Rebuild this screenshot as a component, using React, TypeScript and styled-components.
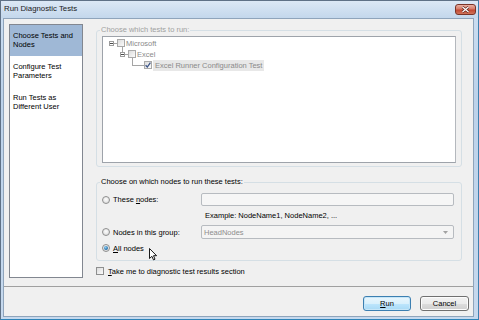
import styled, { createGlobalStyle } from "styled-components";

const GlobalStyle = createGlobalStyle`
  html, body {
    margin: 0;
    padding: 0;
    background: #fff;
  }
  body {
    font-family: "Liberation Sans", Arial, sans-serif;
    font-size: 7.5px;
    color: #000;
  }
  * {
    box-sizing: border-box;
  }
`;

const Window = styled.div`
  position: relative;
  width: 479px;
  height: 320px;
  display: flex;
  flex-direction: column;
  border: 1px solid #5f7186;
  border-right-color: #3d7fae;
  border-bottom-color: #2f84b8;
  background: linear-gradient(#cddff2, #bcd2ea 30%, #c6d9ee);
  overflow: hidden;
`;

const TitleBar = styled.div`
  flex: 0 0 17px;
  display: flex;
  align-items: flex-start;
  justify-content: space-between;
  padding: 0 2px 0 3px;
  background: linear-gradient(#dce8f5, #c3d7ec);
`;

const Title = styled.span`
  font-size: 7.8px;
  line-height: 16px;
  color: #1a1a1a;
`;

const CloseButton = styled.div`
  margin-top: 3px;
  width: 21px;
  height: 11px;
  border: 1px solid #7a3428;
  border-radius: 3px;
  background: linear-gradient(#eab0a2, #d67a68 45%, #c24832 55%, #d0735a);
  display: flex;
  align-items: center;
  justify-content: center;
`;

const Client = styled.div`
  flex: 1;
  margin: 0 4px 2px 2px;
  border: 1px solid #8fa4bb;
  background: #f0f0f0;
  display: flex;
  flex-direction: column;
`;

const Main = styled.div`
  flex: 0 0 268px;
  display: flex;
  padding: 5px 11px 0 5px;
  border-bottom: 1px solid #a0a0a0;
`;

const Nav = styled.div`
  flex: 0 0 74px;
  height: 254px;
  border: 1px solid #828790;
  background: #fff;
  display: flex;
  flex-direction: column;
`;

const NavItem = styled.div<{ $selected?: boolean }>`
  padding: 6px 3px 7px;
  line-height: 9px;
  background: ${(p) => (p.$selected ? "#9fb8d6" : "transparent")};
`;

const Content = styled.div`
  flex: 1;
  margin-left: 13px;
  display: flex;
  flex-direction: column;
`;

const Group = styled.fieldset<{ $gap?: number }>`
  margin: ${(p) => p.$gap ?? 1}px 0 0;
  padding: 0 5px ${(p) => (p.$gap ? 7 : 3)}px;
  border: 1px solid #d5dfe5;
  border-radius: 3px;
  min-width: 0;
  display: flex;
  flex-direction: column;
`;

const GroupLabel = styled.legend<{ $disabled?: boolean }>`
  padding: 0 1px;
  margin-left: -2px;
  line-height: 10px;
  color: ${(p) => (p.$disabled ? "#a0a0a0" : "#000")};
`;

const TreeBox = styled.div`
  margin-top: 1px;
  height: 127px;
  border: 1px solid #9ea3aa;
  border-right-color: #b4b8bd;
  background: #fff;
  padding-top: 0.5px;
`;

const TreeRow = styled.div<{ $indent: number }>`
  height: 11px;
  display: flex;
  align-items: center;
  padding-left: ${(p) => p.$indent}px;
`;

const Lead = styled.svg`
  overflow: visible;
  flex: 0 0 auto;
`;

const TreeLabel = styled.span<{ $highlight?: boolean }>`
  margin-left: 1px;
  padding: 0 ${(p) => (p.$highlight ? 2 : 0)}px;
  line-height: 11px;
  color: #8a8a8a;
  background: ${(p) => (p.$highlight ? "#e8e8e8" : "transparent")};
`;

const Box = styled.span<{ $disabled?: boolean }>`
  flex: 0 0 8px;
  width: 8px;
  height: 8px;
  border: 1px solid ${(p) => (p.$disabled ? "#a9a9a9" : "#8e8f8f")};
  background: linear-gradient(135deg, #dcdcdc, #fbfbfb);
  display: flex;
  align-items: center;
  justify-content: center;
`;

const OptionRow = styled.div<{ $height: number; $top: number }>`
  height: ${(p) => p.$height}px;
  margin-top: ${(p) => p.$top}px;
  display: flex;
  align-items: center;
`;

const OptionLabel = styled.label`
  flex: 0 0 99px;
  display: flex;
  align-items: center;
  gap: 3px;
`;

const Radio = styled.span<{ $checked?: boolean }>`
  width: 8px;
  height: 8px;
  border-radius: 50%;
  border: 1px solid #8e8f8f;
  background: radial-gradient(circle at 50% 40%, #fdfdfd, #d6d6d6);
  display: flex;
  align-items: center;
  justify-content: center;

  &::after {
    content: "";
    display: ${(p) => (p.$checked ? "block" : "none")};
    width: 4px;
    height: 4px;
    border-radius: 50%;
    background: radial-gradient(circle at 40% 35%, #8fd0f5, #1f6aa5 70%, #184f80);
  }
`;

const TextBox = styled.div`
  width: 253px;
  height: 13px;
  border: 1px solid #b7bbc0;
  border-radius: 2px;
  background: #f6f6f6;
`;

const Select = styled.div`
  width: 253px;
  height: 14px;
  border: 1px solid #b7bbc0;
  border-radius: 2px;
  background: #f4f4f4;
  color: #8d8d8d;
  display: flex;
  align-items: center;
  justify-content: space-between;
  padding: 0 5px 0 2px;
`;

const Hint = styled.div`
  margin: 5px 0 0 103px;
  line-height: 10px;
`;

const CheckRow = styled.label`
  margin-top: 5px;
  height: 10px;
  display: flex;
  align-items: center;
  gap: 4px;
`;

const Footer = styled.div`
  flex: 1;
  display: flex;
  justify-content: flex-end;
  align-items: flex-start;
  gap: 9px;
  padding: 9px 4px 0 0;
`;

const Button = styled.div<{ $default?: boolean; $width: number }>`
  width: ${(p) => p.$width}px;
  height: 15px;
  border: 1px solid ${(p) => (p.$default ? "#3c7fb1" : "#707070")};
  border-radius: 3px;
  box-shadow: inset 0 0 0 1px ${(p) => (p.$default ? "#c6e6f8" : "#fcfcfc")};
  background: ${(p) =>
    p.$default
      ? "linear-gradient(#eaf6fd, #d9f0fc 50%, #bee6fd 50%, #a7d9f5)"
      : "linear-gradient(#f2f2f2, #ebebeb 50%, #dddddd 50%, #cfcfcf)"};
  display: flex;
  align-items: center;
  justify-content: center;
  line-height: 13px;
`;

const Cursor = styled.svg`
  position: absolute;
  left: 148px;
  top: 247px;
`;

const Expander = ({ stem }: { stem?: boolean }) => (
  <Lead width="10" height="11" viewBox="0 0 10 11">
    {stem && <line x1="4.5" y1="-2" x2="4.5" y2="3" stroke="#a5a5a5" />}
    <rect x="2.5" y="3.5" width="4" height="4" fill="#fff" stroke="#9c9c9c" />
    <line x1="3" y1="5.5" x2="6" y2="5.5" stroke="#4a4a4a" />
    <line x1="7" y1="5.5" x2="10" y2="5.5" stroke="#a5a5a5" />
  </Lead>
);

const Elbow = () => (
  <Lead width="16" height="11" viewBox="0 0 16 11">
    <line x1="4.5" y1="-2" x2="4.5" y2="5.5" stroke="#a5a5a5" />
    <line x1="4" y1="5.5" x2="16" y2="5.5" stroke="#a5a5a5" />
  </Lead>
);

const Check = ({ color }: { color: string }) => (
  <svg width="6" height="6" viewBox="0 0 6 6">
    <path d="M0.6 3.2 L2.3 5 L5.4 0.6" fill="none" stroke={color} strokeWidth="1.3" />
  </svg>
);

export default function App() {
  return (
    <>
      <GlobalStyle />
      <Window>
        <TitleBar>
          <Title>Run Diagnostic Tests</Title>
          <CloseButton>
            <svg width="9" height="7" viewBox="0 0 9 7">
              <path d="M1.5 1 L7.5 6 M7.5 1 L1.5 6" stroke="#5b1e15" strokeWidth="2.6" />
              <path d="M1.5 1 L7.5 6 M7.5 1 L1.5 6" stroke="#fff" strokeWidth="1.3" />
            </svg>
          </CloseButton>
        </TitleBar>
        <Client>
          <Main>
            <Nav>
              <NavItem $selected>
                Choose Tests and
                <br />
                Nodes
              </NavItem>
              <NavItem>
                Configure Test
                <br />
                Parameters
              </NavItem>
              <NavItem>
                Run Tests as
                <br />
                Different User
              </NavItem>
            </Nav>
            <Content>
              <Group>
                <GroupLabel $disabled>Choose which tests to run:</GroupLabel>
                <TreeBox>
                  <TreeRow $indent={4}>
                    <Expander />
                    <Box $disabled />
                    <TreeLabel>Microsoft</TreeLabel>
                  </TreeRow>
                  <TreeRow $indent={15}>
                    <Expander stem />
                    <Box $disabled />
                    <TreeLabel>Excel</TreeLabel>
                  </TreeRow>
                  <TreeRow $indent={25}>
                    <Elbow />
                    <Box $disabled>
                      <Check color="#3d5688" />
                    </Box>
                    <TreeLabel $highlight>Excel Runner Configuration Test</TreeLabel>
                  </TreeRow>
                </TreeBox>
              </Group>
              <Group $gap={10}>
                <GroupLabel>Choose on which nodes to run these tests:</GroupLabel>
                <OptionRow $height={13} $top={6}>
                  <OptionLabel>
                    <Radio />
                    <span>
                      These <u>n</u>odes:
                    </span>
                  </OptionLabel>
                  <TextBox />
                </OptionRow>
                <Hint>Example: NodeName1, NodeName2, ...</Hint>
                <OptionRow $height={14} $top={4}>
                  <OptionLabel>
                    <Radio />
                    <span>
                      Nodes in this <u>g</u>roup:
                    </span>
                  </OptionLabel>
                  <Select>
                    <span>HeadNodes</span>
                    <svg width="5" height="3" viewBox="0 0 5 3">
                      <path d="M0 0 L5 0 L2.5 3 Z" fill="#a2a2a2" />
                    </svg>
                  </Select>
                </OptionRow>
                <OptionRow $height={10} $top={4}>
                  <OptionLabel>
                    <Radio $checked />
                    <span>
                      <u>A</u>ll nodes
                    </span>
                  </OptionLabel>
                </OptionRow>
              </Group>
              <CheckRow>
                <Box />
                <span>
                  <u>T</u>ake me to diagnostic test results section
                </span>
              </CheckRow>
            </Content>
          </Main>
          <Footer>
            <Button $default $width={48}>
              <span>
                <u>R</u>un
              </span>
            </Button>
            <Button $width={49}>Cancel</Button>
          </Footer>
        </Client>
        <Cursor width="9" height="13" viewBox="0 0 9 13">
          <path
            d="M0.5 0.5 L0.5 10.5 L2.9 8.3 L4.5 11.9 L6 11.2 L4.5 7.7 L7.6 7.7 Z"
            fill="#fff"
            stroke="#000"
            strokeWidth="0.9"
            strokeLinejoin="miter"
          />
        </Cursor>
      </Window>
    </>
  );
}
